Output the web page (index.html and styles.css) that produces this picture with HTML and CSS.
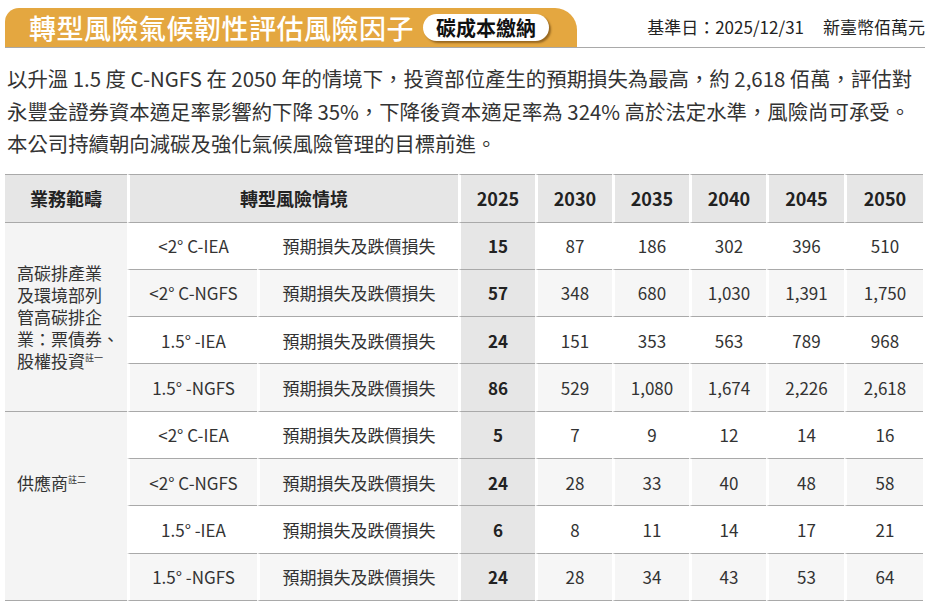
FILE: index.html
```html
<!DOCTYPE html>
<html lang="zh-Hant">
<head>
<meta charset="utf-8">
<title>轉型風險氣候韌性評估風險因子</title>
<link rel="stylesheet" href="styles.css">
</head>
<body>
<header class="top">
  <div class="title-bar">
    <h1 class="title">轉型風險氣候韌性評估風險因子</h1>
    <span class="pill">碳成本繳納</span>
  </div>
  <div class="meta"><span>基準日：2025/12/31</span><span class="unit">新臺幣佰萬元</span></div>
</header>
<p class="intro">以升溫 1.5 度 C-NGFS 在 2050 年的情境下，投資部位產生的預期損失為最高，約 2,618 佰萬，評估對<br>永豐金證券資本適足率影響約下降 35%，下降後資本適足率為 324% 高於法定水準，風險尚可承受。<br>本公司持續朝向減碳及強化氣候風險管理的目標前進。</p>
<table class="risk">
  <colgroup>
    <col class="c-scope"><col class="c-scen"><col class="c-type">
    <col class="c-y25"><col class="c-y"><col class="c-y"><col class="c-y"><col class="c-y45"><col class="c-y50">
  </colgroup>
  <thead>
    <tr>
      <th class="first">業務範疇</th>
      <th colspan="2">轉型風險情境</th>
      <th>2025</th><th>2030</th><th>2035</th><th>2040</th><th>2045</th><th>2050</th>
    </tr>
  </thead>
  <tbody>
    <tr>
      <td rowspan="4" class="first scope">高碳排產業<br>及環境部列<br>管高碳排企<br>業：票債券、<br>股權投資<sup>註一</sup></td>
      <td>&lt;2° C-IEA</td><td>預期損失及跌價損失</td>
      <td class="y25">15</td><td>87</td><td>186</td><td>302</td><td>396</td><td>510</td>
    </tr>
    <tr class="alt">
      <td>&lt;2° C-NGFS</td><td>預期損失及跌價損失</td>
      <td class="y25">57</td><td>348</td><td>680</td><td>1,030</td><td>1,391</td><td>1,750</td>
    </tr>
    <tr>
      <td>1.5° -IEA</td><td>預期損失及跌價損失</td>
      <td class="y25">24</td><td>151</td><td>353</td><td>563</td><td>789</td><td>968</td>
    </tr>
    <tr class="alt">
      <td>1.5° -NGFS</td><td>預期損失及跌價損失</td>
      <td class="y25">86</td><td>529</td><td>1,080</td><td>1,674</td><td>2,226</td><td>2,618</td>
    </tr>
    <tr>
      <td rowspan="4" class="first scope supplier">供應商<sup>註二</sup></td>
      <td>&lt;2° C-IEA</td><td>預期損失及跌價損失</td>
      <td class="y25">5</td><td>7</td><td>9</td><td>12</td><td>14</td><td>16</td>
    </tr>
    <tr class="alt">
      <td>&lt;2° C-NGFS</td><td>預期損失及跌價損失</td>
      <td class="y25">24</td><td>28</td><td>33</td><td>40</td><td>48</td><td>58</td>
    </tr>
    <tr>
      <td>1.5° -IEA</td><td>預期損失及跌價損失</td>
      <td class="y25">6</td><td>8</td><td>11</td><td>14</td><td>17</td><td>21</td>
    </tr>
    <tr class="alt">
      <td>1.5° -NGFS</td><td>預期損失及跌價損失</td>
      <td class="y25">24</td><td>28</td><td>34</td><td>43</td><td>53</td><td>64</td>
    </tr>
  </tbody>
</table>
</body>
</html>
```

FILE: styles.css
```css
html, body {
  margin: 0;
  padding: 0;
  background: #ffffff;
}

body {
  font-family: "Noto Sans CJK TC", "Noto Sans", sans-serif;
  color: #333333;
}

.top {
  display: flex;
  align-items: center;
  margin: 8px 6px 0 5px;
  border-bottom: 1px solid #a9a9a9;
}

.title-bar {
  display: flex;
  align-items: center;
  gap: 9px;
  width: 572px;
  height: 39px;
  box-sizing: border-box;
  padding-left: 24px;
  background: #e4a740;
  border-radius: 14px 22px 0 0;
}

.title {
  margin: 0;
  font-size: 27px;
  font-weight: 500;
  color: #ffffff;
  line-height: 1;
  letter-spacing: 0.5px;
}

.pill {
  display: inline-block;
  background: #ffffff;
  color: #111111;
  font-size: 20px;
  font-weight: 700;
  line-height: 27px;
  padding: 0 13px;
  border-radius: 14px;
  box-shadow: 2px 2px 2px rgba(90, 55, 10, 0.55);
}

.meta {
  margin-left: auto;
  font-size: 17px;
  color: #222222;
  white-space: nowrap;
  padding-bottom: 2px;
}

.meta .unit {
  margin-left: 19px;
}

.intro {
  margin: 14px 0 0 7px;
  font-size: 20.4px;
  line-height: 32.5px;
  color: #333333;
  white-space: nowrap;
}

.risk {
  margin: 14px 0 0 5px;
  width: 918px;
  table-layout: fixed;
  border-collapse: separate;
  border-spacing: 0;
  font-size: 17px;
  color: #333333;
}

.c-scope { width: 122px; }
.c-scen { width: 130px; }
.c-type { width: 201px; }
.c-y25 { width: 77px; }
.c-y { width: 77px; }
.c-y45 { width: 78px; }
.c-y50 { width: 79px; }

.risk th,
.risk td {
  padding: 0;
  text-align: center;
  vertical-align: middle;
  border-left: 3px solid #ffffff;
  border-bottom: 1px solid #a9a9a9;
}

.risk th.first,
.risk td.first {
  border-left: 0;
}

.risk th {
  height: 47px;
  background: #e6e6e6;
  font-size: 18px;
  font-weight: 700;
  color: #222222;
  border-top: 1px solid #a9a9a9;
}

.risk td {
  height: 46.3px;
  background: #ffffff;
}

.risk tr.alt td {
  background: #f6f6f6;
}

.risk td.scope {
  background: #f4f4f4;
  text-align: left;
  padding-left: 12px;
  line-height: 22px;
  color: #333333;
}

.risk td.supplier {
  padding-bottom: 46px;
}

.risk sup {
  font-size: 9px;
  vertical-align: 7px;
  line-height: 0;
}

.risk td.y25,
.risk tr.alt td.y25 {
  background: #e6e6e6;
  font-weight: 700;
  color: #222222;
}
```
